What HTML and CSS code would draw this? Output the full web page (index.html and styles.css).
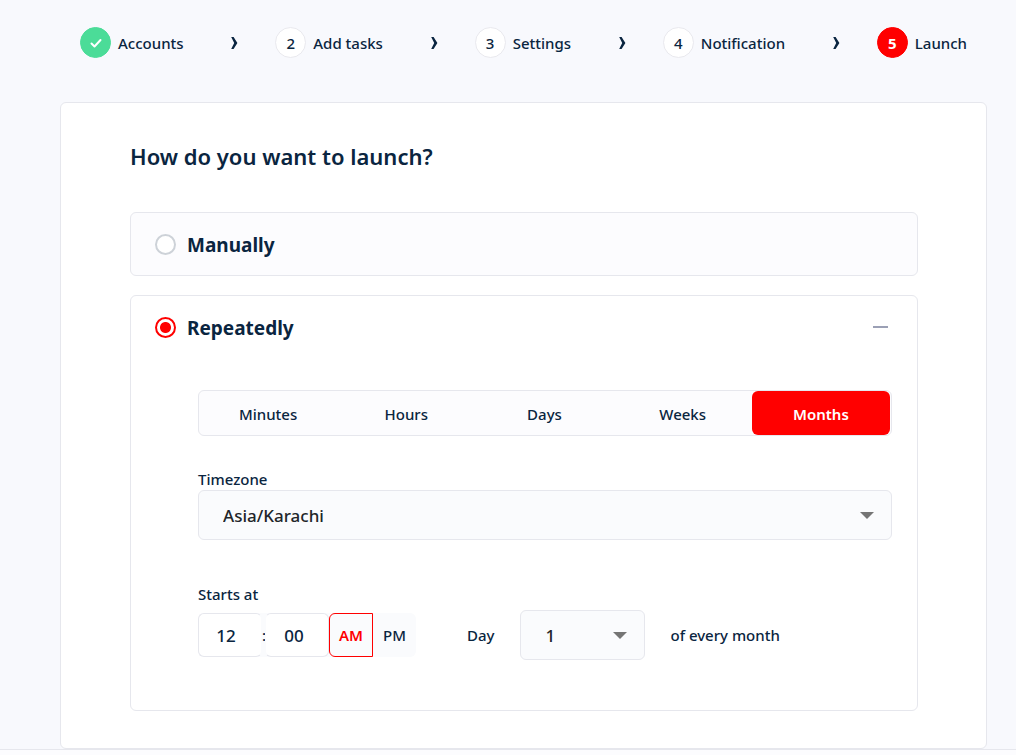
FILE: index.html
```html
<!DOCTYPE html>
<html lang="en">
<head>
<meta charset="utf-8">
<meta name="viewport" content="width=device-width, initial-scale=1">
<title>Launch</title>
<link rel="stylesheet" href="styles.css">
</head>
<body>
<main class="page">
  <nav aria-label="Progress">
    <ol class="steps">
      <li class="step">
        <span class="badge badge-done"><svg class="check" viewBox="0 0 14 12" aria-hidden="true"><path d="M2.5 6.5 5.5 9.5 11.5 3"/></svg></span>
        <span>Accounts</span>
      </li>
      <li class="arrow" aria-hidden="true"><svg class="chevron" viewBox="0 0 8 14"><path d="M1.2 1H3.6L7.4 7 3.6 13H1.2L4.2 7Z"/></svg></li>
      <li class="step"><span class="badge">2</span><span>Add tasks</span></li>
      <li class="arrow" aria-hidden="true"><svg class="chevron" viewBox="0 0 8 14"><path d="M1.2 1H3.6L7.4 7 3.6 13H1.2L4.2 7Z"/></svg></li>
      <li class="step"><span class="badge">3</span><span>Settings</span></li>
      <li class="arrow" aria-hidden="true"><svg class="chevron" viewBox="0 0 8 14"><path d="M1.2 1H3.6L7.4 7 3.6 13H1.2L4.2 7Z"/></svg></li>
      <li class="step"><span class="badge">4</span><span>Notification</span></li>
      <li class="arrow" aria-hidden="true"><svg class="chevron" viewBox="0 0 8 14"><path d="M1.2 1H3.6L7.4 7 3.6 13H1.2L4.2 7Z"/></svg></li>
      <li class="step" aria-current="step"><span class="badge badge-current">5</span><span>Launch</span></li>
    </ol>
  </nav>

  <form class="card">
    <h1 class="title">How do you want to launch?</h1>

    <section class="option option-closed">
      <div class="option-head">
        <input class="radio" type="radio" name="mode" id="manually">
        <label class="option-label" for="manually">Manually</label>
      </div>
    </section>

    <section class="option">
      <div class="option-head">
        <input class="radio" type="radio" name="mode" id="repeatedly" checked>
        <label class="option-label" for="repeatedly">Repeatedly</label>
        <button class="collapse" type="button" aria-label="Collapse"><span class="dash"></span></button>
      </div>
      <div class="option-body">
        <div class="tabs">
          <button class="tab" type="button">Minutes</button>
          <button class="tab" type="button">Hours</button>
          <button class="tab" type="button">Days</button>
          <button class="tab" type="button">Weeks</button>
          <button class="tab tab-active" type="button">Months</button>
        </div>

        <label class="label" for="timezone">Timezone</label>
        <div class="select-box">
          <select class="select" id="timezone"><option>Asia/Karachi</option></select>
          <svg class="caret" viewBox="0 0 14 7" aria-hidden="true"><path d="M0 0H14L7 7Z"/></svg>
        </div>

        <label class="label label-start" for="hour">Starts at</label>
        <div class="schedule">
          <div class="time">
            <input class="time-input" id="hour" type="text" value="12">
            <span class="colon">:</span>
            <input class="time-input minute" type="text" value="00" aria-label="Minutes">
            <button class="period period-active" type="button">AM</button>
            <button class="period" type="button">PM</button>
          </div>
          <label class="day-label" for="day">Day</label>
          <div class="select-box select-day">
            <select class="select" id="day"><option>1</option></select>
            <svg class="caret" viewBox="0 0 14 7" aria-hidden="true"><path d="M0 0H14L7 7Z"/></svg>
          </div>
          <span>of every month</span>
        </div>
      </div>
    </section>
  </form>
</main>
<footer class="footer"></footer>
</body>
</html>
```
FILE: styles.css
```css
* {
  box-sizing: border-box;
}

body {
  margin: 0;
  min-height: 100vh;
  display: flex;
  flex-direction: column;
  background: #f8f9fd;
  color: #0a2540;
  font: 500 15px/20px "Noto Sans", "Open Sans", sans-serif;
}

button,
input,
select {
  margin: 0;
  padding: 0;
  border: 0;
  color: inherit;
  font: inherit;
}

button {
  cursor: pointer;
}

.page {
  padding: 27px 29px 0 60px;
}

.steps {
  display: flex;
  align-items: center;
  justify-content: space-between;
  margin: 0 0 44px;
  padding: 0 20px;
  list-style: none;
}

.step {
  display: flex;
  align-items: center;
  gap: 7px;
  white-space: nowrap;
}

.badge {
  display: flex;
  align-items: center;
  justify-content: center;
  width: 31px;
  height: 31px;
  border: 1px solid #e9e9ee;
  border-radius: 50%;
  background: #fff;
}

.badge-done {
  border-color: #4bdc98;
  background: #4bdc98;
}

.badge-current {
  border-color: #f00;
  background: #f00;
  color: #fff;
  font-weight: 700;
}

.check {
  width: 14px;
  height: 12px;
  fill: none;
  stroke: #fff;
  stroke-width: 2;
  stroke-linecap: round;
  stroke-linejoin: round;
}

.arrow {
  display: flex;
  padding-left: 10px;
}

.chevron {
  width: 8px;
  height: 14px;
  fill: #0a2540;
}

.card {
  padding: 37px 68px 37px 69px;
  border: 1px solid #e6e7ed;
  border-radius: 6px;
  background: #fff;
}

.title {
  margin: 0 0 40px;
  font-size: 22px;
  line-height: 32px;
  font-weight: 600;
}

.option {
  border: 1px solid #e6e7ed;
  border-radius: 6px;
  background: #fff;
}

.option-closed {
  margin-bottom: 19px;
  background: #fcfcfe;
}

.option-head {
  display: flex;
  align-items: center;
  height: 62px;
  padding: 0 24px;
  gap: 11px;
}

.option-label {
  padding-top: 2px;
  font-size: 19px;
  line-height: 28px;
  font-weight: 700;
}

.radio {
  appearance: none;
  width: 21px;
  height: 21px;
  border: 2px solid #cdd2d8;
  border-radius: 50%;
  background: #fff;
}

.radio:checked {
  border-color: #f00;
  background: radial-gradient(circle, #f00 5px, #fff 6px);
}

.collapse {
  display: flex;
  align-items: center;
  height: 20px;
  margin-left: auto;
  padding: 0 5px;
  background: none;
}

.dash {
  width: 15px;
  height: 2px;
  background: #9ba0b5;
}

.option-body {
  padding: 32px 25px 50px 67px;
}

.tabs {
  display: grid;
  grid-template-columns: repeat(5, 1fr);
  height: 46px;
  margin-bottom: 33px;
  padding-right: 1px;
  border: 1px solid #e6e7ed;
  border-radius: 6px;
  background: #fcfcfe;
}

.tab {
  padding-top: 2px;
  border-radius: 6px;
  background: none;
}

.tab-active {
  background: #f00;
  color: #fff;
  font-weight: 600;
}

.label {
  display: block;
  margin-bottom: 1px;
}

.label-start {
  margin: 44px 0 6px;
}

.select-box {
  display: grid;
  align-items: center;
}

.select {
  grid-area: 1 / 1;
  appearance: none;
  width: 100%;
  height: 50px;
  padding: 2px 24px 0;
  border: 1px solid #e6e7ed;
  border-radius: 6px;
  background: #fafbfd;
  color: #212529;
  font-size: 17px;
}

.caret {
  grid-area: 1 / 1;
  justify-self: end;
  width: 14px;
  height: 7px;
  margin-right: 18px;
  fill: #757575;
  pointer-events: none;
}

.schedule {
  display: flex;
  align-items: center;
  white-space: nowrap;
}

.time {
  display: flex;
  align-items: center;
  height: 44px;
  margin-right: 51px;
  border-radius: 6px;
  background: #fafbfd;
}

.time-input {
  width: 64px;
  height: 44px;
  padding-right: 8px;
  border: 1px solid #e6e7ed;
  border-right-color: #fafbfd;
  border-radius: 6px;
  background: #fff;
  font-size: 17px;
  text-align: center;
}

.colon {
  width: 3px;
  text-align: center;
}

.minute {
  padding-right: 6px;
  border-left-color: #fafbfd;
  border-right-color: #e6e7ed;
}

.period {
  width: 43px;
  height: 44px;
  background: none;
}

.period-active {
  width: 44px;
  border: 1px solid #f00;
  border-radius: 6px 0 0 6px;
  color: #f00;
  font-weight: 600;
}

.select-day {
  width: 125px;
  margin: 0 25px 0 26px;
}

.footer {
  flex: 1;
  border-top: 1px solid #e6e7ed;
  background: #fcfcfe;
}
```
